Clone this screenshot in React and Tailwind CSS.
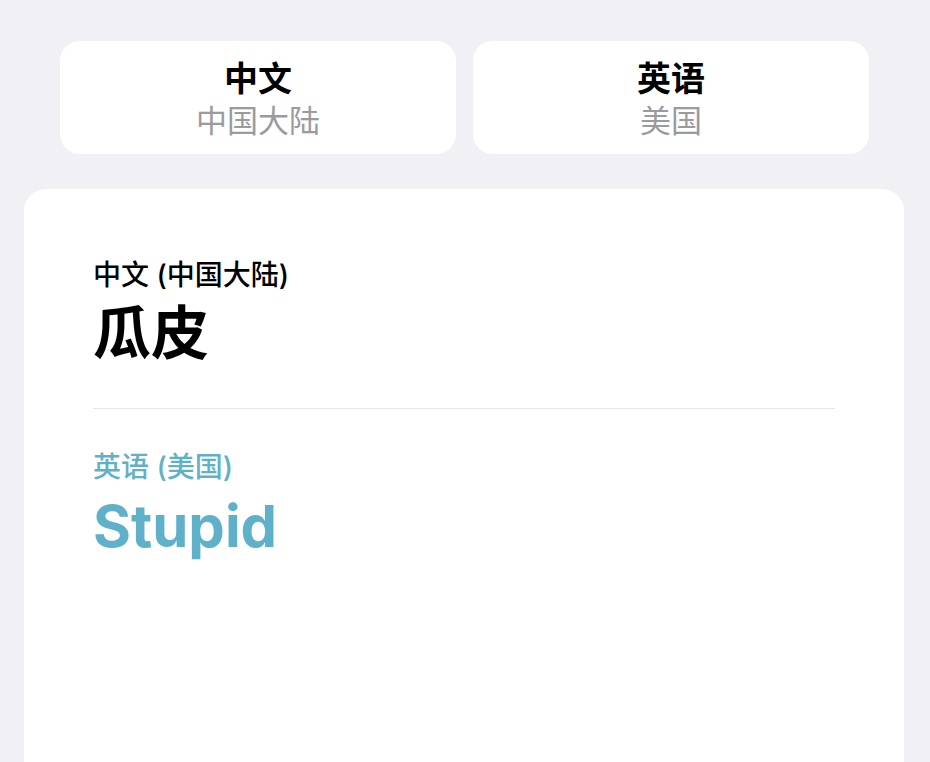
import React from "react";

const font = { fontFamily: 'Inter, "Noto Sans CJK SC", sans-serif' };

function LangCard({ title, sub }) {
  return (
    <div className="flex-1 h-[113px] bg-white rounded-[20px] flex flex-col items-center justify-center pt-[4px]">
      <div className="text-[34px] leading-[40px] font-bold text-black">{title}</div>
      <div className="text-[31px] leading-[38px] mt-[3px] text-[#9a9a9f]">{sub}</div>
    </div>
  );
}

export default function App() {
  return (
    <div style={font} className="w-[930px] h-[762px] bg-[#f0f0f5] overflow-hidden flex flex-col">
      <div className="flex gap-[17px] px-[60px] pt-[41px] w-[929px]">
        <LangCard title="中文" sub="中国大陆" />
        <LangCard title="英语" sub="美国" />
      </div>
      <div className="mt-[35px] ml-[24px] mr-[26px] flex-1 bg-white rounded-t-[22px] px-[69px] pt-[68px]">
        <div className="text-[28px] leading-[36px] font-medium text-black">中文 (中国大陆)</div>
        <div className="text-[58px] leading-[74px] mt-[3px] font-bold text-black">瓜皮</div>
        <div className="h-px bg-[#e5e5ea] mt-[38px]"></div>
        <div className="mt-[40px] text-[28px] leading-[36px] font-medium text-[#5fb1c9]">英语 (美国)</div>
        <div className="text-[58px] leading-[72px] mt-[5px] font-bold text-[#5fb1c9]">Stupid</div>
      </div>
    </div>
  );
}
